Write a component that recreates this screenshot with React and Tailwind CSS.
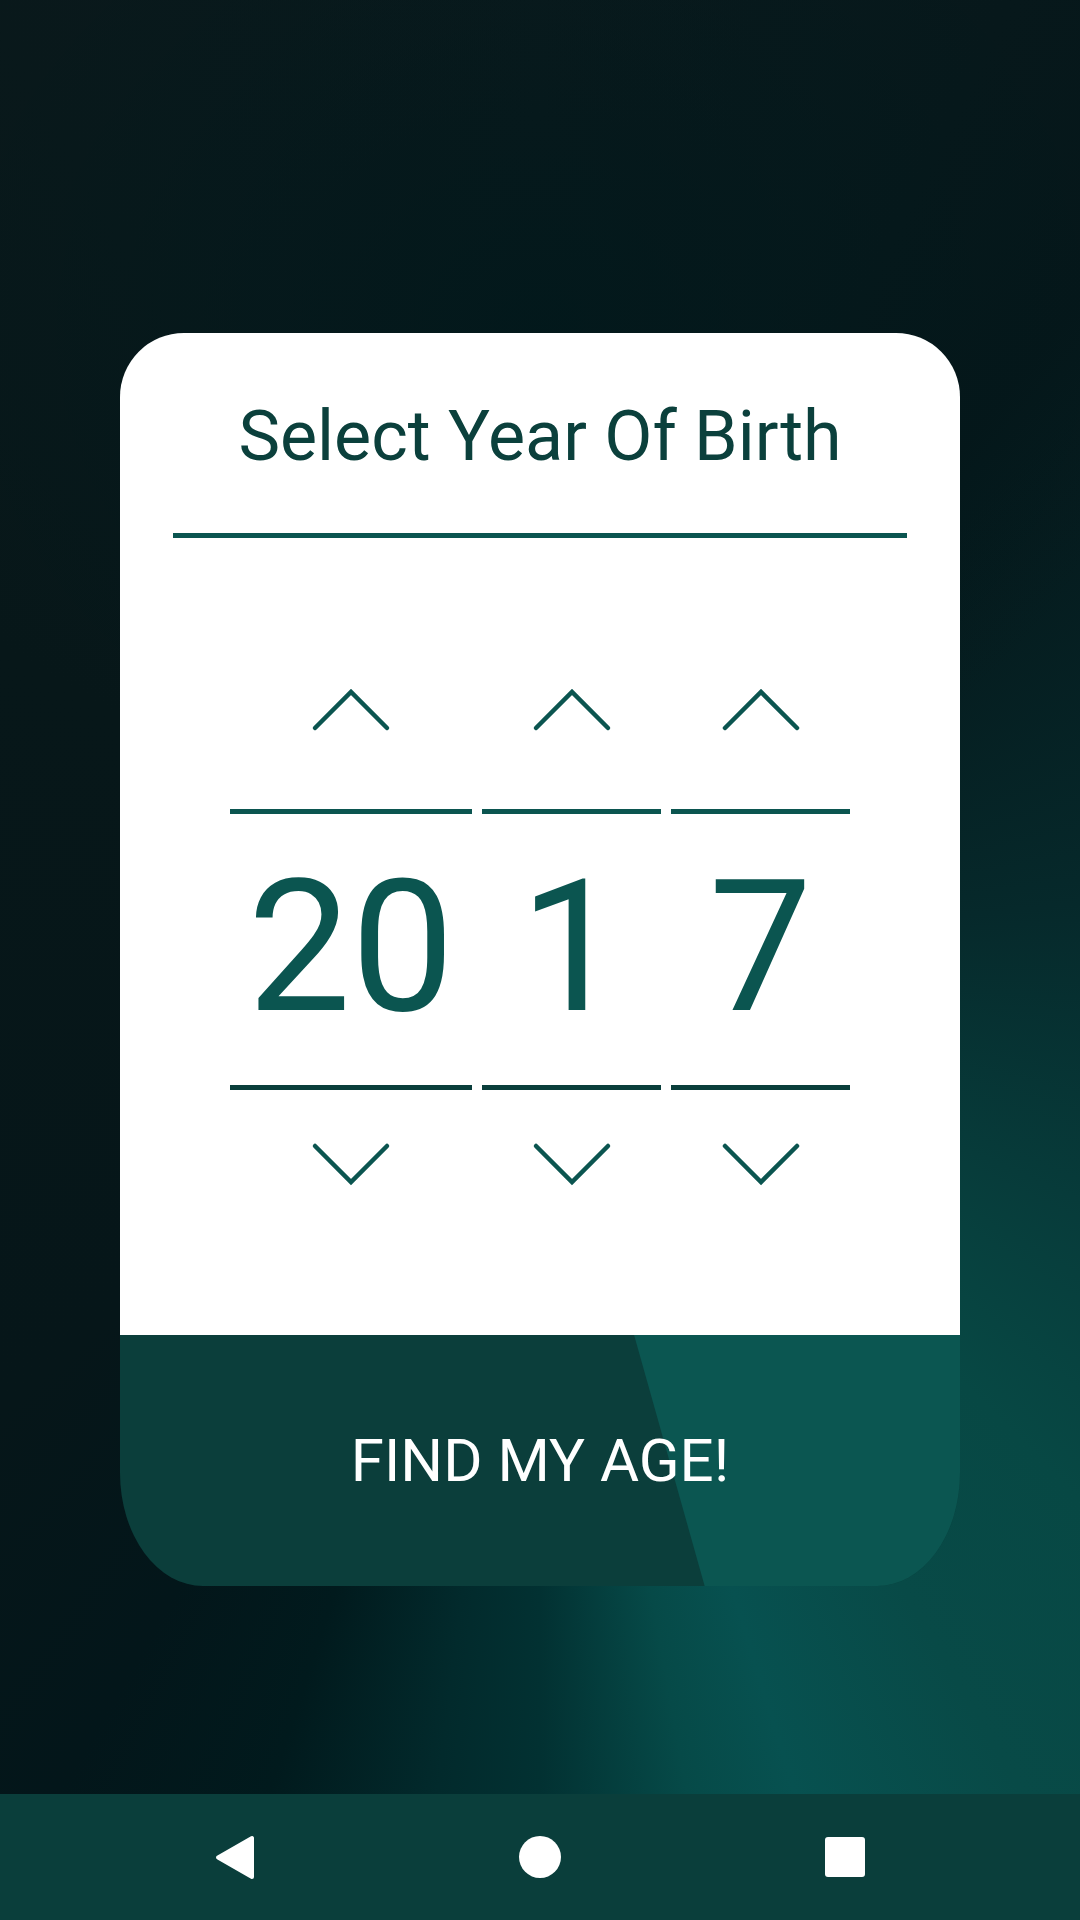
const font = { fontFamily: 'Roboto, "Noto Sans", sans-serif' }

function ChevronUp() {
  return (
    <svg width="80" height="44" viewBox="0 0 80 44" fill="none">
      <polyline points="4,40 40,4 76,40" stroke="#0b5550" strokeWidth="4.5" strokeLinecap="round" strokeLinejoin="miter" />
    </svg>
  )
}

function ChevronDown() {
  return (
    <svg width="80" height="44" viewBox="0 0 80 44" fill="none">
      <polyline points="4,4 40,40 76,4" stroke="#0b5550" strokeWidth="4.5" strokeLinecap="round" strokeLinejoin="miter" />
    </svg>
  )
}

function DigitColumn({ value, width }) {
  return (
    <div className={`flex flex-col items-center ${width}`}>
      <ChevronUp />
      <div className="mt-[77px] h-[5px] w-full bg-[#0b5550]" />
      <div className="mt-[41px] h-[184px] text-[184px] leading-[184px] text-[#0b5550]">{value}</div>
      <div className="mt-[46px] h-[5px] w-full bg-[#0a3e3b]" />
      <div className="mt-[52px]">
        <ChevronDown />
      </div>
    </div>
  )
}

export default function App() {
  return (
    <div className="flex h-[1920px] w-full flex-col overflow-hidden" style={font}>
      <main className="flex-1 bg-[radial-gradient(ellipse_620px_520px_at_540px_330px,rgba(1,24,27,0.85)_0%,rgba(1,24,27,0)_100%),conic-gradient(from_0deg_at_540px_960px,#0b1a1d_0deg,#05171a_39deg,#06292b_84deg,#073b3a_114deg,#074844_135deg,#084a47_150deg,#075150_163deg,#064a48_170deg,#023132_180deg,#022a2c_187deg,#011a1d_198deg,#03161a_210deg,#061619_230deg,#071719_300deg,#0b1a1d_360deg)] pt-[333px]">
        <div className="mx-auto w-[840px] overflow-hidden rounded-t-[64px] rounded-bl-[83px_113px] rounded-br-[83px_113px]">
          <div className="flex flex-col items-center bg-white pb-[149px] pt-[68px]">
            <h1 className="text-[70px] font-normal leading-[70px] text-[#0b403c]">Select Year Of Birth</h1>
            <div className="mt-[62px] h-[5px] w-[734px] bg-[#0b5550]" />
            <div className="mt-[150px] flex gap-[10px]">
              <DigitColumn value="20" width="w-[242px]" />
              <DigitColumn value="1" width="w-[179px]" />
              <DigitColumn value="7" width="w-[179px]" />
            </div>
          </div>
          <button className="relative flex h-[251px] w-full items-center justify-center bg-[#0b3e3b]">
            <div className="absolute inset-0 bg-[#0b5651] [clip-path:polygon(61.2%_0,100%_0,100%_100%,69.6%_100%)]" />
            <span className="relative text-[60px] font-normal leading-none text-white">FIND MY AGE!</span>
          </button>
        </div>
      </main>
      <nav className="flex h-[126px] items-center justify-center gap-[205px] bg-[#0a3e3b]">
        <div className="flex w-[100px] justify-center">
          <svg width="40" height="45" viewBox="0 0 40 45">
            <polygon points="37,3 37,42 3,22.5" fill="white" stroke="white" strokeWidth="4" strokeLinejoin="round" />
          </svg>
        </div>
        <div className="flex w-[100px] justify-center">
          <div className="h-[42px] w-[42px] rounded-full bg-white" />
        </div>
        <div className="flex w-[100px] justify-center">
          <div className="h-[40px] w-[40px] rounded-[3px] bg-white" />
        </div>
      </nav>
    </div>
  )
}
